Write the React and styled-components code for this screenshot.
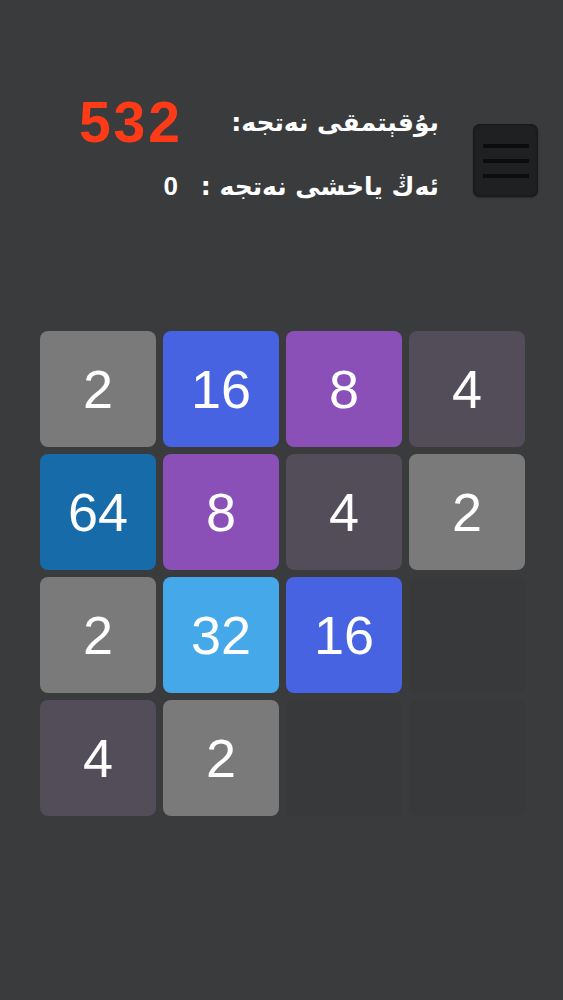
import React from "react";
import styled, { createGlobalStyle } from "styled-components";

const Global = createGlobalStyle`
  html, body { margin: 0; padding: 0; background: #3a3b3d; }
  body { font-family: "Liberation Sans", Arial, sans-serif; }
`;

const Page = styled.div`
  width: 563px;
  height: 1000px;
  box-sizing: border-box;
  padding: 92px 25px 0 40px;
  background: #3a3b3d;
`;

const Header = styled.div`
  display: flex;
  align-items: flex-start;
`;

const ScoreGrid = styled.div`
  flex: 1;
  min-width: 0;
  display: grid;
  grid-template-columns: 140px minmax(0, 1fr);
  row-gap: 16px;
  align-items: center;
  margin-right: 35px;
`;

const Value = styled.div`
  text-align: right;
  font-family: "Liberation Sans", Arial, sans-serif;
  font-weight: 700;
  color: ${(p) => p.$color};
  font-size: ${(p) => p.$size}px;
  letter-spacing: ${(p) => p.$spacing}px;
  line-height: ${(p) => p.$lh}px;
  margin-right: ${(p) => p.$mr}px;
`;

const Label = styled.div`
  direction: rtl;
  text-align: right;
  color: #ffffff;
  font-family: "DejaVu Sans", sans-serif;
  font-weight: 700;
  font-size: 25px;
  white-space: pre;
`;

const MenuButton = styled.button`
  width: 65px;
  height: 73px;
  margin-top: 32px;
  margin-left: -1px;
  flex: none;
  border: none;
  border-radius: 7px;
  background: #1f2022;
  box-shadow: inset 0 0 3px rgba(0, 0, 0, 0.6), 0 1px 2px rgba(0, 0, 0, 0.3);
  display: flex;
  flex-direction: column;
  justify-content: center;
  align-items: center;
  gap: 11px;
  padding: 0;
`;

const MenuLine = styled.span`
  display: block;
  width: 46px;
  height: 4px;
  background: #0c0c0d;
`;

const Board = styled.div`
  margin-top: 127px;
  width: 485px;
  display: grid;
  grid-template-columns: repeat(4, 116px);
  grid-auto-rows: 116px;
  gap: 7px;
`;

const Tile = styled.div`
  border-radius: 8px;
  background: ${(p) => p.$bg};
  color: #ffffff;
  display: flex;
  align-items: center;
  justify-content: center;
  font-family: "Liberation Sans", Arial, sans-serif;
  font-size: 54px;
  font-weight: 400;
`;

const COLORS = {
  0: "#38393b",
  2: "#7a7a7a",
  4: "#534c59",
  8: "#8a50b8",
  16: "#4763e2",
  32: "#45a8e9",
  64: "#186ba9",
};

const cells = [
  2, 16, 8, 4,
  64, 8, 4, 2,
  2, 32, 16, 0,
  4, 2, 0, 0,
];

export default function App() {
  return (
    <>
      <Global />
      <Page>
        <Header>
          <ScoreGrid>
            <Value $color="#ff3a17" $size={57} $spacing={3} $lh={60} $mr={-3}>
              532
            </Value>
            <Label>بۇقېتمقى نەتجە:</Label>
            <Value $color="#ffffff" $size={26} $spacing={0} $lh={36} $mr={2}>
              0
            </Value>
            <Label>{"ئەڭ ياخشى نەتجە :  "}</Label>
          </ScoreGrid>
          <MenuButton aria-label="menu">
            <MenuLine />
            <MenuLine />
            <MenuLine />
          </MenuButton>
        </Header>
        <Board>
          {cells.map((v, i) => (
            <Tile key={i} $bg={COLORS[v]}>
              {v ? v : ""}
            </Tile>
          ))}
        </Board>
      </Page>
    </>
  );
}
